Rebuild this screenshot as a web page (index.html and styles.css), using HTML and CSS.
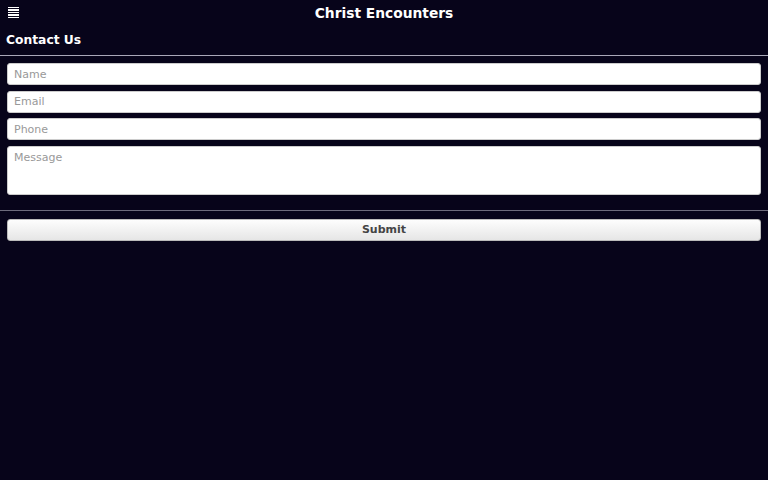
FILE: index.html
```html
<!DOCTYPE html>
<html lang="en">
<head>
<meta charset="utf-8">
<link rel="stylesheet" href="styles.css">
<title>Christ Encounters</title>
</head>
<body>
<div id="header">
  <span class="menu"><i></i><i></i><i></i><i></i><i></i></span>
  <h1>Christ Encounters</h1>
</div>
<div id="page">
  <h2>Contact Us</h2>
  <form class="contact">
    <input type="text" placeholder="Name">
    <input type="text" placeholder="Email">
    <input type="text" placeholder="Phone">
    <textarea placeholder="Message"></textarea>
  </form>
  <div class="actions">
    <button type="button">Submit</button>
  </div>
</div>
</body>
</html>
```

FILE: styles.css
```css
html, body {
  margin: 0;
  padding: 0;
  background: #07041a;
  font-family: "DejaVu Sans", sans-serif;
  color: #fff;
}
#header {
  height: 26px;
  display: flex;
  align-items: center;
  justify-content: center;
  position: relative;
}
#header h1 {
  margin: 0;
  font-size: 13.8px;
  font-weight: bold;
}
.menu {
  position: absolute;
  left: 8px;
  top: 7px;
  width: 11px;
  display: flex;
  flex-direction: column;
  gap: 1px;
}
.menu i {
  display: block;
  height: 1.4px;
  background: #fff;
}
#page h2 {
  margin: 0;
  padding: 7px 6px 8px;
  font-size: 12.3px;
  font-weight: bold;
  border-bottom: 1px solid #a9a8b8;
}
.contact {
  display: flex;
  flex-direction: column;
  gap: 5.5px;
  padding: 7px 7px 15px;
  border-bottom: 1px solid #6d6b7c;
}
.contact input, .contact textarea {
  box-sizing: border-box;
  margin: 0;
  width: 100%;
  height: 22px;
  border: 1px solid #ccc;
  border-radius: 3px;
  background: #fff;
  padding: 2px 6px;
  font-family: "DejaVu Sans", sans-serif;
  font-size: 11px;
}
.contact textarea {
  height: 49px;
  resize: none;
  padding: 4px 6px;
}
::placeholder {
  color: #999;
}
.actions {
  padding: 8px 7px;
}
.actions button {
  display: block;
  width: 100%;
  height: 22px;
  border: 1px solid #bbb;
  border-radius: 3px;
  background: linear-gradient(#fdfdfd, #e6e6e6);
  color: #444;
  font-family: "DejaVu Sans", sans-serif;
  font-size: 11px;
  font-weight: bold;
  padding: 0;
}
```
